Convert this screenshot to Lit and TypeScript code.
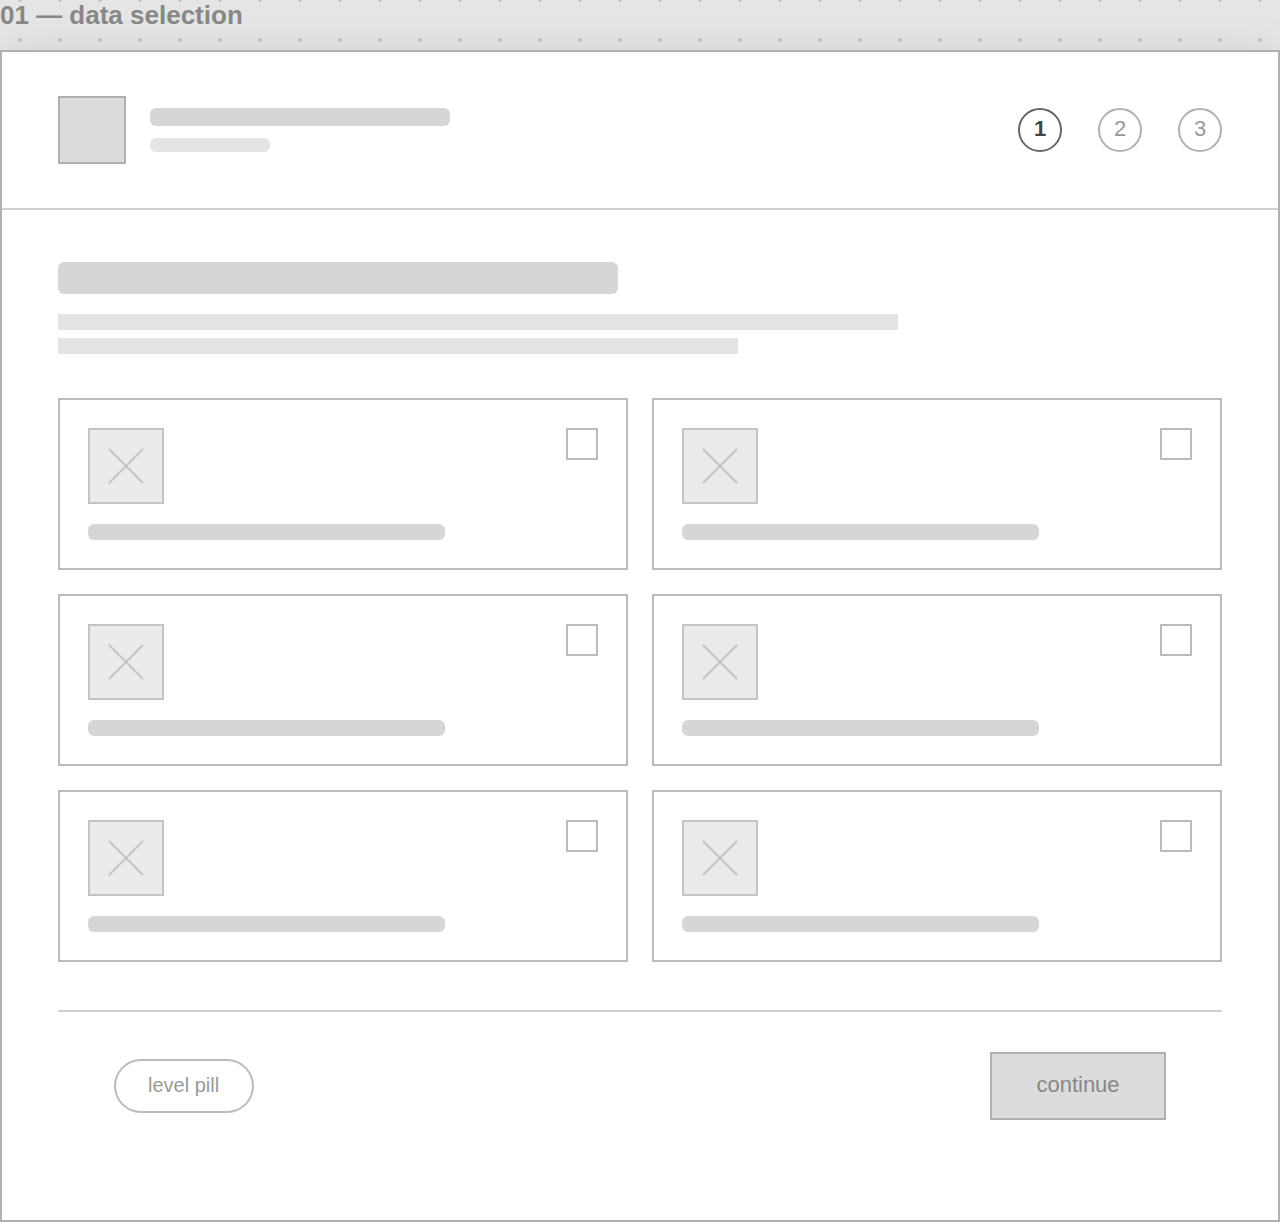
import { LitElement, html, css } from "lit";
import { customElement, property } from "lit/decorators.js";

@customElement("data-card")
class DataCard extends LitElement {
  @property({ type: Number }) index = 1;

  static styles = css`
    :host {
      display: block;
    }
    .card {
      display: flex;
      flex-direction: column;
      gap: 20px;
      padding: 28px;
      border: 2px solid #bbb;
      background: #fff;
    }
    .top {
      display: flex;
      justify-content: space-between;
      align-items: flex-start;
    }
    .thumb {
      display: flex;
      align-items: center;
      justify-content: center;
      box-sizing: border-box;
      width: 76px;
      height: 76px;
      border: 2px solid #c4c4c4;
      background: #ebebeb;
    }
    .cross {
      display: block;
      width: 36px;
      height: 36px;
      stroke: #c4c4c4;
      stroke-width: 2;
    }
    .check {
      appearance: none;
      box-sizing: border-box;
      width: 32px;
      height: 32px;
      margin: 0;
      border: 2px solid #bbb;
      background: #fff;
    }
    .check:checked {
      background: #bbb;
    }
    .label {
      display: block;
      width: 70%;
      height: 16px;
      border-radius: 6px;
      background: #d6d6d6;
    }
  `;

  render() {
    return html`
      <label class="card">
        <span class="top">
          <span class="thumb">
            <svg class="cross" viewBox="0 0 36 36" aria-hidden="true">
              <path d="M1 1L35 35M35 1L1 35" />
            </svg>
          </span>
          <input class="check" type="checkbox" name="dataset" value=${this.index} aria-label=${`Option ${this.index}`} />
        </span>
        <span class="label"></span>
      </label>
    `;
  }
}

@customElement("app-root")
class AppRoot extends LitElement {
  static styles = css`
    :host {
      display: flex;
      flex-direction: column;
      min-height: 100vh;
      background: radial-gradient(circle, #c4c4c4 2px, transparent 2px) 0 20px / 40px 40px #e5e5e5;
      font-family: "Liberation Sans", Arial, sans-serif;
      overflow: hidden;
    }
    .caption {
      margin: 0;
      padding-bottom: 20px;
      font-size: 26px;
      line-height: 30px;
      font-weight: 700;
      color: #888;
    }
    .panel {
      flex: 1;
      border: 2px solid #b0b0b0;
      background: #fff;
      box-shadow: 0 8px 48px rgba(0, 0, 0, 0.1);
    }
    .header {
      display: flex;
      align-items: center;
      justify-content: space-between;
      padding: 44px 56px;
      border-bottom: 2px solid #d0d0d0;
    }
    .brand {
      display: flex;
      align-items: center;
      gap: 24px;
    }
    .logo {
      box-sizing: border-box;
      width: 68px;
      height: 68px;
      border: 2px solid #b0b0b0;
      background: #dcdcdc;
    }
    .names {
      display: flex;
      flex-direction: column;
      gap: 12px;
    }
    .bar {
      border-radius: 6px;
      background: #d6d6d6;
    }
    .name {
      width: 300px;
      height: 18px;
    }
    .tagline {
      width: 120px;
      height: 14px;
      background: #e4e4e4;
    }
    .steps {
      display: flex;
      gap: 36px;
      margin: 0;
      padding: 0;
      list-style: none;
    }
    .step {
      box-sizing: border-box;
      width: 44px;
      height: 44px;
      border: 2px solid #b0b0b0;
      border-radius: 50%;
      font-size: 22px;
      line-height: 38px;
      text-align: center;
      color: #999;
    }
    .current {
      border-color: #666;
      font-weight: 700;
      color: #444;
    }
    .body {
      padding: 52px 56px 60px;
    }
    .heading {
      max-width: 560px;
      height: 32px;
      margin-bottom: 20px;
    }
    .line {
      height: 16px;
      background: #e4e4e4;
    }
    .long {
      max-width: 840px;
      margin-bottom: 8px;
    }
    .short {
      max-width: 680px;
    }
    .grid {
      display: grid;
      grid-template-columns: 1fr 1fr;
      gap: 24px;
      margin: 44px 0 48px;
    }
    .footer {
      display: flex;
      align-items: center;
      justify-content: space-between;
      padding: 40px 56px;
      border-top: 2px solid #d0d0d0;
    }
    .pill {
      box-sizing: border-box;
      min-width: 140px;
      padding: 12px 32px 14px;
      border: 2px solid #bbb;
      border-radius: 28px;
      font-size: 20px;
      line-height: 24px;
      color: #999;
    }
    .continue {
      box-sizing: border-box;
      min-width: 176px;
      padding: 18px 44px 20px;
      border: 2px solid #b0b0b0;
      border-radius: 0;
      background: #dcdcdc;
      font-family: inherit;
      font-size: 22px;
      line-height: 26px;
      color: #888;
    }
  `;

  render() {
    return html`
      <h1 class="caption">01 — data selection</h1>
      <main class="panel">
        <header class="header">
          <div class="brand">
            <div class="logo"></div>
            <div class="names">
              <div class="bar name"></div>
              <div class="bar tagline"></div>
            </div>
          </div>
          <ol class="steps">
            <li class="step current" aria-current="step">1</li>
            <li class="step">2</li>
            <li class="step">3</li>
          </ol>
        </header>
        <div class="body">
          <div class="bar heading"></div>
          <div class="line long"></div>
          <div class="line short"></div>
          <div class="grid">
            ${[1, 2, 3, 4, 5, 6].map((n) => html`<data-card .index=${n}></data-card>`)}
          </div>
          <footer class="footer">
            <span class="pill">level pill</span>
            <button class="continue" type="button">continue</button>
          </footer>
        </div>
      </main>
    `;
  }
}
